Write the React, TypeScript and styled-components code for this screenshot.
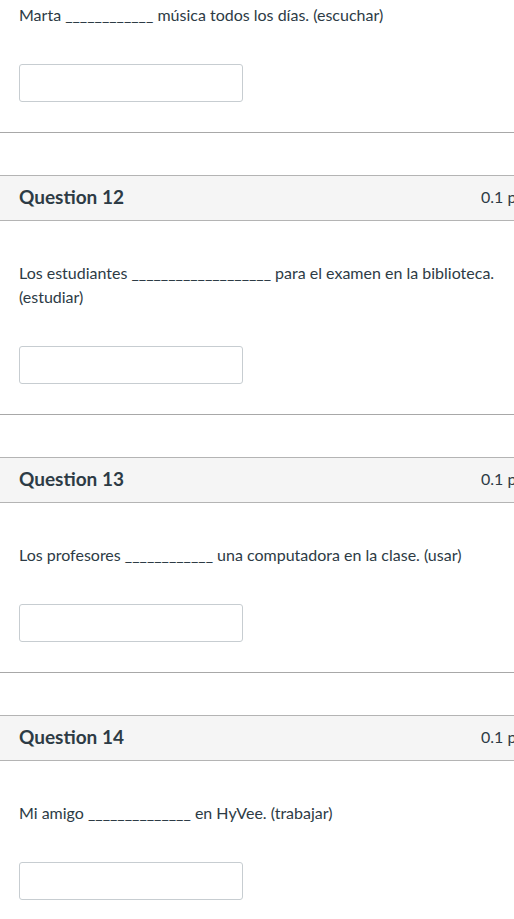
import { FC } from "react";
import styled, { createGlobalStyle } from "styled-components";

const GlobalStyle = createGlobalStyle`
	html, body {
		margin: 0;
		padding: 0;
		background: #ffffff;
	}
	body {
		font-family: Lato, "Open Sans", "Liberation Sans", sans-serif;
		color: #2d3b45;
		overflow: hidden;
	}
`;

interface IQuestion {
	number?: number;
	points?: string;
	text: string;
}

const questions: IQuestion[] = [
	{ text: "Marta ____________ música todos los días. (escuchar)" },
	{
		number: 12,
		points: "0.1 pts",
		text: "Los estudiantes ___________________ para el examen en la biblioteca. (estudiar)",
	},
	{
		number: 13,
		points: "0.1 pts",
		text: "Los profesores ____________ una computadora en la clase. (usar)",
	},
	{ number: 14, points: "0.1 pts", text: "Mi amigo ______________ en HyVee. (trabajar)" },
];

const Question: FC<{ question: IQuestion; isLast: boolean }> = ({ question, isLast }) => (
	<SQuestion>
		{question.number !== undefined && (
			<SHeader>
				<SName>Question {question.number}</SName>
				<SPoints>{question.points}</SPoints>
			</SHeader>
		)}
		<SBody hasHeader={question.number !== undefined}>
			<SText>{question.text}</SText>
			<SInput type="text" aria-label="answer" />
		</SBody>
		{!isLast && <SDivider />}
	</SQuestion>
);

const App: FC = () => (
	<SViewport>
		<GlobalStyle />
		<SPage>
			{questions.map((q, idx) => (
				<Question key={"q" + idx} question={q} isLast={idx === questions.length - 1} />
			))}
		</SPage>
	</SViewport>
);

export default App;

// the quiz column is wider than the window, so the points label runs off the right edge
const SViewport = styled.div`
	width: 100vw;
	height: 100vh;
	overflow: hidden;
`;

const SPage = styled.div`
	width: 548px;
`;

const SQuestion = styled.div`
	display: flex;
	flex-direction: column;
`;

const SHeader = styled.div`
	display: flex;
	align-items: center;
	justify-content: space-between;
	box-sizing: border-box;
	height: 46px;
	padding: 0 19px 3px;
	background: #f5f5f5;
	border-top: 1px solid #b4b4b4;
	border-bottom: 1px solid #b4b4b4;
`;

const SName = styled.div`
	font-size: 19px;
	font-weight: 700;
	color: #2d3b45;
`;

const SPoints = styled.div`
	font-size: 16px;
	color: #2d3b45;
`;

const SBody = styled.div<{ hasHeader: boolean }>`
	display: flex;
	flex-direction: column;
	align-items: flex-start;
	padding: ${({ hasHeader }) => (hasHeader ? "40px" : "3px")} 19px 30px;
`;

const SText = styled.p`
	margin: 0;
	max-width: 490px;
	font-size: 16px;
	line-height: 24px;
`;

const SInput = styled.input`
	box-sizing: border-box;
	margin-top: 37px;
	width: 224px;
	height: 38px;
	border: 1px solid #c7cdd1;
	border-radius: 3px;
	background: #ffffff;
	font-family: inherit;
	font-size: 16px;
	padding: 0 8px;
`;

const SDivider = styled.div`
	height: 1px;
	background: #a8a8a8;
	margin-bottom: 42px;
`;
